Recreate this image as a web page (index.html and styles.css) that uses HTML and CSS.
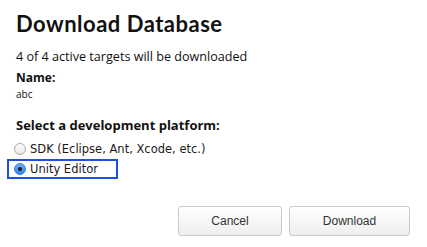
FILE: index.html
```html
<!DOCTYPE html>
<html>
<head>
<meta charset="utf-8">
<link rel="stylesheet" href="styles.css">
</head>
<body>
<div class="dialog">
  <h1 class="title">Download Database</h1>
  <p class="summary">4 of 4 active targets will be downloaded</p>
  <div class="name-label">Name:</div>
  <div class="name-value">abc</div>
  <div class="platform-label">Select a development platform:</div>
  <div class="options">
    <label class="option"><span class="radio"></span><span>SDK (Eclipse, Ant, Xcode, etc.)</span></label>
    <label class="option focused"><span class="radio checked"></span><span>Unity Editor</span></label>
  </div>
  <div class="actions">
    <button class="btn cancel">Cancel</button>
    <button class="btn download">Download</button>
  </div>
</div>
</body>
</html>
```
FILE: styles.css
```css
html, body {
  margin: 0;
  padding: 0;
  background: #ffffff;
}
.dialog {
  display: flex;
  flex-direction: column;
  padding: 10px 16px 0 16px;
  font-family: "Open Sans", sans-serif;
  color: #111;
}
.title {
  margin: 0;
  font-family: "Lato", sans-serif;
  font-size: 22px;
  font-weight: 700;
  line-height: 28px;
  letter-spacing: 0.5px;
}
.summary {
  margin: 10px 0 0 0;
  font-size: 12.6px;
  line-height: 18px;
}
.name-label {
  margin-top: 5px;
  font-size: 12px;
  font-weight: 700;
  line-height: 14px;
}
.name-value {
  margin-top: 3px;
  font-size: 10px;
  line-height: 12px;
}
.platform-label {
  margin-top: 17px;
  font-size: 13px;
  font-weight: 700;
  line-height: 16px;
}
.options {
  display: flex;
  flex-direction: column;
  margin-top: 6px;
  margin-left: -9px;
  font-family: "DejaVu Sans", sans-serif;
  font-size: 11.5px;
  color: #1a1a1a;
}
.option {
  display: flex;
  align-items: center;
  gap: 4px;
  height: 20px;
  padding-left: 7px;
  width: fit-content;
  box-sizing: border-box;
}
.option.focused {
  border: 2px solid #1f4fe0;
  padding: 0 4px 0 5px;
  width: 111px;
}
.radio {
  width: 10px;
  height: 10px;
  border-radius: 50%;
  border: 1px solid #a9a9a9;
  background: linear-gradient(#fdfdfd, #e9e9e9);
  display: flex;
  align-items: center;
  justify-content: center;
  flex: none;
}
.radio.checked {
  border-color: #3b82e0;
  background: linear-gradient(#6fb0f7, #2f80e8);
}
.radio.checked::after {
  content: "";
  width: 4px;
  height: 4px;
  border-radius: 50%;
  background: #1a1a1a;
}
.actions {
  display: flex;
  justify-content: flex-end;
  gap: 7px;
  margin-top: 27px;
  padding-right: 1px;
}
.btn {
  height: 30px;
  border: 1px solid #c9c9c9;
  border-radius: 3px;
  background: linear-gradient(#ffffff, #eeeeee);
  font-family: "Liberation Sans", sans-serif;
  font-size: 12px;
  color: #333;
}
.cancel { width: 104px; }
.download { width: 121px; }
```
